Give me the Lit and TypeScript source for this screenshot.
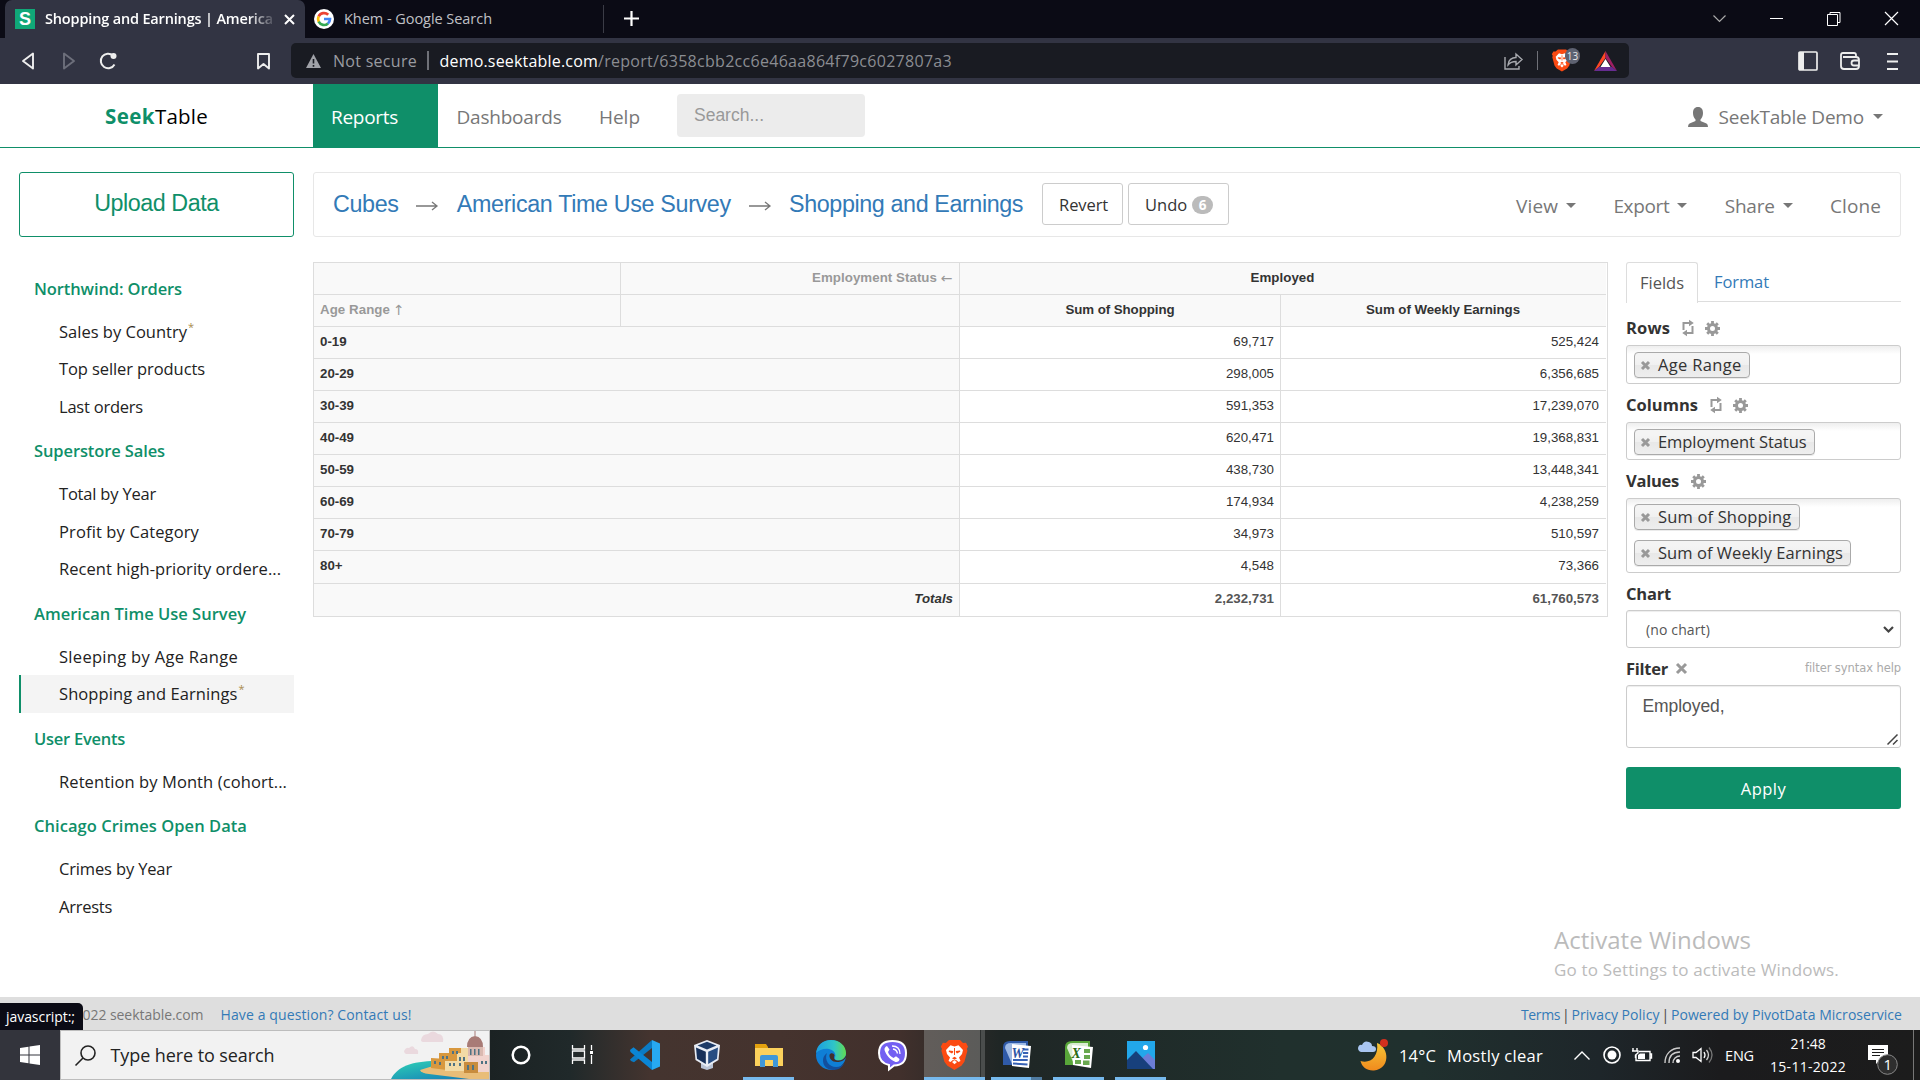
import { LitElement, html, css, svg, nothing } from "lit";
import { customElement } from "lit/decorators.js";

/* Text with a design width: tracking is adjusted after the first render. */
const t = (text: string, w: number, cls = "") =>
  html`<span class="t ${cls}" data-w=${w}>${text}</span>`;

const icon = (w: number, h: number, body: unknown, cls = "") =>
  html`<svg class="i ${cls}" width=${w} height=${h} viewBox="0 0 ${w} ${h}">${body}</svg>`;

const lion = svg`
  <path fill="#fb4a12" d="M8 0h11l3 3 3-.3 2 4-1.200 2 .6 2-3 11-3 4-7 4.300-7-4.300-3-4-3-11 .6-2-1.200-2 2-4 3 .3z"/>
  <path fill="#fff" d="M13.500 6.500l4-1.200 4.500 4.700-1 4-3 3.500 1.500 3.500-2 1-2.300-2-1.700.4-1.700-.4-2.300 2-2-1 1.500-3.500-3-3.500-1-4 4.500-4.700z"/>
  <path fill="#fb4a12" d="M8 10.500l4 .6.3 1-1.300 1.500-3.300-1.800zM19 10.500l-4 .6-.3 1 1.300 1.500 3.300-1.800zM11 18.300l2.500-1.600 2.500 1.600-2.500 1.400zM13 8h1v7h-1z"/>
  <path fill="#fff" d="M11 22l2.500-1.500 2.500 1.500-2.500 2.300z"/>`;

const retweet = icon(12, 18, svg`<g fill="none" stroke="#999" stroke-width="2"><path d="M1.500 11V4h6"/><path d="M10.500 7v7h-6"/></g><path fill="#999" d="M7 .8L11.800 4 7 7.300zM5 10.700v6.600L.2 14z"/>`);
const gear = icon(15, 15, svg`<circle cx="7.500" cy="7.500" r="4" fill="none" stroke="#999" stroke-width="3"/><g stroke="#999" stroke-width="2.800"><path d="M7.500 0v3M7.500 12v3M0 7.500h3M12 7.500h3M2.200 2.200l2 2M10.800 10.800l2 2M2.200 12.800l2-2M10.800 4.200l2-2"/></g>`);
const cross = (s: number) => icon(s, s, svg`<path d="M1 1L${s - 1} ${s - 1}M${s - 1} 1L1 ${s - 1}" stroke="#999" stroke-width="3"/>`);
const caret = icon(10, 5, svg`<path fill="#777" d="M0 0h10L5 5z"/>`);

const GROUPS: [string, number, [string, number, boolean?, boolean?][]][] = [
  ["Northwind: Orders", 148, [["Sales by Country", 128, true], ["Top seller products", 146], ["Last orders", 84]]],
  ["Superstore Sales", 131, [["Total by Year", 97], ["Profit by Category", 140], ["Recent high-priority ordere...", 222]]],
  ["American Time Use Survey", 212, [["Sleeping by Age Range", 179], ["Shopping and Earnings", 178.5, true, true]]],
  ["User Events", 91, [["Retention by Month (cohort...", 228]]],
  ["Chicago Crimes Open Data", 213, [["Crimes by Year", 113], ["Arrests", 53]]],
];

const ROWS: [string, string, string][] = [
  ["0-19", "69,717", "525,424"],
  ["20-29", "298,005", "6,356,685"],
  ["30-39", "591,353", "17,239,070"],
  ["40-49", "620,471", "19,368,831"],
  ["50-59", "438,730", "13,448,341"],
  ["60-69", "174,934", "4,238,259"],
  ["70-79", "34,973", "510,597"],
  ["80+", "4,548", "73,366"],
];

const appIcons = {
  cortana: icon(30, 30, svg`<circle cx="15" cy="15" r="8.300" fill="none" stroke="#fff" stroke-width="2.500"/>`),
  taskview: icon(30, 30, svg`<g fill="none" stroke="#fff" stroke-width="1.300"><path d="M4.500 5v4h12V5M4.500 24v-4h12v4M4.500 11h12v7h-12zM23.500 5v5M23.500 15v9"/></g><rect x="22" y="11" width="3" height="3" fill="#fff"/>`),
  code: icon(30, 30, svg`<path fill="#0b7bc4" d="M0 19.500L22 0v8L4 22.300 1 21z"/><path fill="#0a86d6" d="M0 10l3.500-2.700L22 22v8L.5 12z"/><path fill="#27a9f2" d="M22 0l8 3.500v23L22 30z"/>`),
  vbox: icon(26, 30, svg`<path fill="#b9c4d6" d="M7 23h12v5l-6 2-6-2z"/><path fill="#e8edf5" d="M13 0l13 5-1.500 15L13 27 1.500 20 0 5z"/><path fill="#1d3b68" d="M13 1.800l9.500 3.700L13 9.500 3.500 5.500z"/><path fill="#16305a" d="M2 7.500l9.800 4.200V24L3 18.800z"/><path fill="#274d82" d="M24 7.500l-9.800 4.200V24l8.800-5.200z"/>`),
  folder: icon(28, 24, svg`<path fill="#e3a10e" d="M0 1h11l2 3v3H0z"/><path fill="#fbd15c" d="M0 5h28v18H0z"/><path fill="#3f97d8" d="M5 24V14q0-2 2-2h14q2 0 2 2v10h-5v-7h-8v7z"/>`),
  edge: icon(30, 30, svg`<defs><linearGradient id="eg" x1="0" x2="1"><stop offset="0" stop-color="#1b9de2"/><stop offset=".6" stop-color="#2fc5c8"/><stop offset="1" stop-color="#62dc52"/></linearGradient></defs><circle cx="15" cy="15" r="15" fill="#0f7fd6"/><path fill="url(#eg)" d="M0 13C1 5 7 0 15 0c9 0 15 6 15 13 0 5-4 7.500-8 7.500-3 0-4-1.500-3-3 1-2 .5-7-6-8.500C8 8 3 10 0 13z"/><path fill="#124f9d" d="M11 13c-3 7 2 14 9 14 4 0 7-2 8.500-4.500C25 32 12 32 8 25c-2-5-1-9 3-12z"/><path fill="#42312c" d="M30.500 15.500c-.5 4-4.500 6.500-9.500 6.500-5 0-8-3.500-7.500-7 .5-2.500 4.500-2.500 5 .5-1.500 3 .5 5 4 5 3.500 0 6-2 7.500-5z"/>`),
  viber: icon(29, 30, svg`<path fill="#7360f2" stroke="#fff" stroke-width="2" d="M14.500 1C23 1 28 4 28 13s-4 12-12 12.500L11 29.500V25C4 23.500 1 20 1 13 1 4 6 1 14.500 1z"/><path fill="#fff" d="M9 6l2.500 3.500-1.500 2.500c1 3 2.500 4.500 5.500 6l2.500-1.700 3.500 2.700c0 2-2 3.500-4 3-5-2-9.500-7-11-12C6.300 8 7.500 6.500 9 6z"/><path d="M14 6c5 0 8 3 8 8M15 9c3 .5 4 2 4.500 4.500" fill="none" stroke="#fff" stroke-width="1.300"/>`),
  brave: icon(27, 30, lion),
  word: icon(30, 30, svg`<path fill="#2f5aa8" d="M1 7q0-6 7-6h18v24H1z"/><path fill="#9db9e4" d="M3 8q0-5 6-5h15v5L10 24z"/><path fill="#fff" d="M10 4l19 2-2 22-17-2z"/><path stroke="#3762b5" stroke-width="2" d="M21 9.500h5.500M21 13h5.200M21 16.500h5M11 20h14.700M11 23.500l14.500 1"/><text x="9.500" y="17.500" class="glyph" fill="#2b54a3">W</text>`),
  excel: icon(30, 30, svg`<path fill="#58a639" d="M1 7q0-6 7-6h18v24H1z"/><path fill="#d9ecd2" d="M3 8q0-5 6-5h15v5L10 24z"/><path fill="#fff" d="M8 5l21 2-2 21-18-3z"/><path fill="#69a84f" d="M20 9h6v4h-6zM20 15h6v4h-6zM11 20h6v4h-6zM19 20.500h6.500v4.500H19z"/><text x="7.500" y="17.500" class="glyph" fill="#2c6b12">X</text>`),
  photos: icon(28, 28, svg`<path fill="#22a7ea" d="M0 0h28v28H0z"/><path fill="#6c7dd6" d="M12 20l9-8 7 7v9H12z"/><path fill="#17407c" d="M0 19L9 10l17 18H0z"/><circle cx="18.500" cy="6.500" r="2.600" fill="#fff"/>`),
};

const TASKS: [keyof typeof appIcons, string][] = [
  ["cortana", ""], ["taskview", ""], ["code", ""], ["vbox", ""], ["folder", "open"],
  ["edge", ""], ["viber", ""], ["brave", "open active"], ["word", "open multi"],
  ["excel", "open"], ["photos", "open"],
];

@customElement("app-root")
export class AppRoot extends LitElement {
  static styles = css`
    :host { display: flex; flex-direction: column; width: 1920px; height: 1080px; overflow: hidden; background: #fff;
      font-family: "Open Sans", "Noto Sans", sans-serif; font-size: 16.500px; color: #333; }
    * { box-sizing: border-box; }
    .t { white-space: pre; flex: none; }
    .i { display: block; flex: none; overflow: visible; }
    .tabs, .tool, .head, .crumbs, .foot, .bar { display: flex; align-items: center; }
    .grow { flex: 1; }
    .glyph { font: italic bold 14px "Liberation Serif", serif; }

    .tabs { height: 38px; flex: none; background: #0b0b15; color: #fff; font-size: 14.500px; padding-left: 5px; }
    .tab { display: flex; align-items: center; height: 38px; width: 300px; background: #323443; border-radius: 7px 7px 0 0; padding: 0 10px; font-weight: 600; }
    .fav { width: 20px; height: 20px; background: #10a878; font: bold 18px/20px "Liberation Sans", sans-serif; text-align: center; margin-right: 10px; flex: none; }
    .clip { width: 230px; display: flex; margin-top: -1px; -webkit-mask: linear-gradient(90deg, #000 203px, transparent 232px); mask: linear-gradient(90deg, #000 203px, transparent 232px); }
    .tab .i { margin-left: 9px; }
    .tab2 { display: flex; align-items: center; gap: 10px; width: 299px; height: 28px; padding-left: 9px; color: #c0c1c6; border-right: 1px solid #3b3c46; }
    .tab2 .t { margin-top: -1px; }
    .plus { margin: -1px 0 0 20px; }
    .wins { display: flex; align-items: center; gap: 44px; padding: 0 22.500px 1px 0; }

    .tool { height: 46px; flex: none; background: #323443; padding-left: 21px; font-size: 16px; color: #9a9ca1; }
    .fwd { margin-left: 27px; } .reload { margin-left: 23px; } .mark { margin-left: 140px; }
    .url { display: flex; align-items: center; width: 1338px; height: 35px; margin: -1px 0 0 21px; background: #191b22; border-radius: 5px; padding: 0 12px 0 15px; }
    .url .sec { margin-left: 12px; } .url .dom { margin-left: 11px; color: #fff; }
    .sep { width: 1.500px; height: 19px; background: #6f7178; margin-left: 10px; flex: none; }
    .url .path { color: #8b8d92; }
    .share { margin-right: 3px; }
    .shield { position: relative; margin: 0 22px 0 14px; }
    .badge { position: absolute; left: 13px; top: -1px; width: 15px; height: 16px; border-radius: 8px; background: #5e6271; color: #e8e8ea; font-size: 10px; line-height: 16px; text-align: center; }
    .side { margin-left: 169px; } .wallet { margin-left: 22px; } .menu { margin-left: 27px; }

    .head { height: 64px; flex: none; border-bottom: 1px solid #0f8f69; font-size: 19px; color: #777; }
    .logo { width: 313px; padding-left: 105px; font-size: 20.500px; color: #000; display: flex; }
    .logo b { color: #0f8f69; font-weight: 700; }
    .on { width: 125px; height: 63px; background: #0f8f69; color: #fff; padding-left: 18px; display: flex; align-items: center; padding-top: 2px; }
    .nav { padding-top: 2px; margin-left: 18.500px; } .nav2 { margin-left: 37.500px; }
    .find { width: 188px; height: 43px; margin-left: 37px; background: #ececec; border-radius: 4px; padding-left: 17px; font: 17.500px/43px "Liberation Sans", sans-serif; color: #999; }
    .user { display: flex; align-items: center; padding: 2px 37px 0 0; }
    .user .t { margin: 0 9px 0 11px; }

    .page { height: 849px; flex: none; display: grid; grid-template-columns: 275px 1588px; gap: 19px; padding: 24px 19px 0; }
    .upload { height: 65px; border: 1px solid #0f8f69; border-radius: 3px; color: #0f8f69; font: 23.300px/61px "Liberation Sans", sans-serif; text-align: center; margin-bottom: 25.750px; }
    .group { height: 50px; padding-left: 15px; line-height: 51px; color: #0f8f69; font-weight: 600; }
    .entry { height: 37.500px; padding-left: 40px; line-height: 37px; color: #222; display: flex; }
    .entry.sel { background: #f4f4f4; border-left: 2px solid #0f8f69; padding-left: 38px; }
    .star { color: #a98b4c; font-size: 11px; line-height: 27px; margin-left: 1px; }

    .crumbs { height: 65px; border: 1px solid #e7e7e7; border-radius: 3px; padding: 0 19px; font-size: 19px; color: #777; }
    .lk { font: 23.300px/30px "Liberation Sans", sans-serif; color: #337ab7; margin-top: -2px; }
    .arr { margin: 2px 18.500px 0 17.800px; }
    .btn { height: 42px; border: 1px solid #ccc; border-radius: 3px; display: flex; align-items: center; color: #333; font-size: 16.500px; padding: 1px 15px 0 16px; margin-top: -1px; }
    .b1 { margin-left: 19px; width: 81px; } .b2 { margin-left: 5px; width: 101px; }
    .num { width: 21px; height: 18px; border-radius: 9px; background: #bbb; color: #fff; font: bold 13.500px/18px "Open Sans", sans-serif; text-align: center; margin-left: 5px; }
    .act { display: flex; align-items: center; gap: 8px; margin-left: 37.300px; padding-top: 2px; }

    .body { display: grid; grid-template-columns: 1295px 275px; gap: 18px; margin-top: 25px; align-items: start; }
    .table { border: 1px solid #ddd; padding-right: 1px; height: 355px; font: 13.300px/30px "Liberation Sans", sans-serif; background: #fff; }
    .tr { display: grid; grid-template-columns: 645px 321px 1fr; height: 32px; border-bottom: 1px solid #ddd; }
    .tr.tall { height: 33px; } .tr.last { border-bottom: 0; font-weight: 700; color: #555; }
    .tr.hd { grid-template-columns: 306px 339px 321px 1fr; background: #f9f9f9; font-weight: 700; }
    .tr.hd.one { grid-template-columns: 306px 339px 1fr; }
    .tr > div { padding: 0 6px; border-left: 1px solid #ddd; text-align: right; }
    .tr > div:last-child { padding-right: 7px; }
    .tr > div:first-child { border-left: 0; padding-left: 6px; }
    .tr.hd > div { text-align: center; }
    .tr > div.rh { text-align: left; font-weight: 700; background: #f9f9f9; color: #333; }
    .tr > div.tot { font-style: italic; background: #f9f9f9; color: #333; }
    .tr.hd > div.dim { color: #999; display: flex; gap: 3px; } .tr.hd > div.end { justify-content: flex-end; }
    .tr i { font: 14px/30px "DejaVu Sans", sans-serif; }
    .end i { width: 13px; text-align: center; }

    .ft { display: flex; height: 40px; border-bottom: 1px solid #ddd; color: #337ab7; line-height: 40px; }
    .ft div { padding-left: 16px; }
    .ft .cur { width: 72px; height: 41px; padding-left: 13px; border: 1px solid #ddd; border-bottom: 0; background: #fff; border-radius: 3px 3px 0 0; color: #555; line-height: 39px; }
    .lab { height: 38px; padding-top: 3px; font-weight: 700; display: flex; align-items: center; }
    .lab.low { height: 37px; }
    .lab.first { margin-top: 5px; }
    .lab .i { margin: 1px 0 0 11.500px; } .lab .x { display: flex; margin-left: -4px; }
    .hint { font: 11.500px "DejaVu Sans", sans-serif; color: #aaa; }
    .box { border: 1px solid #ccc; border-radius: 3px; background: linear-gradient(#eee 0, #fff 8px); padding: 6px 7px; display: flex; flex-direction: column; align-items: flex-start; gap: 10px; height: 38px; }
    .box.tall { height: 39px; }
    .box.two { height: 75px; padding-top: 5px; }
    .tag { height: 26px; border: 1px solid #aaa; border-radius: 4px; background: linear-gradient(#f4f4f4 20%, #f0f0f0 50%, #e8e8e8 52%, #eee); box-shadow: 0 1px 0 rgba(0,0,0,.08); display: flex; align-items: center; gap: 8px; padding: 0 7px 0 6px; color: #333; line-height: 24px; }
    .field { border: 1px solid #ccc; border-radius: 3px; box-shadow: inset 0 1px 1px rgba(0,0,0,.075); color: #555; }
    .sel1 { height: 38px; display: flex; align-items: center; justify-content: space-between; padding: 1px 6px 0 19px; font-size: 14px; }
    .area { height: 63px; display: flex; justify-content: space-between; align-items: flex-end; padding: 0 2px 2px 15.500px; }
    .area .t { align-self: flex-start; font: 17.500px/41px "Liberation Sans", sans-serif; }
    .apply { margin-top: 19px; height: 42px; border-radius: 3px; background: #0f8f69; color: #fff; line-height: 43px; text-align: center; }

    .foot { height: 33px; flex: none; background: #dedede; padding: 2px 18px 0 19px; font-size: 14px; color: #777; }
    .foot a { color: #337ab7; } .foot .q { margin-left: 17px; } .foot .p { width: 11.500px; text-align: center; color: #444; }
    .year { margin-left: 63.500px; }
    .bubble { position: absolute; left: 0; top: 1003px; width: 83px; height: 27px; background: #0b0b15; color: #fff; border-radius: 0 5px 0 0; font-size: 14px; line-height: 27px; padding-left: 6px; }
    .mark1 { position: absolute; left: 1554px; top: 920px; color: #bbb; line-height: 40px; font-size: 24px; display: flex; flex-direction: column; align-items: flex-start; }
    .mark1 .small { font-size: 17px; line-height: 20px; }

    .bar { height: 50px; flex: none; color: #fff; background: linear-gradient(90deg, #33343c 0, #33343c 60px, #1b2223 490px, #20292a 570px, #44342f 650px, #45332e 780px, #41302c 900px, #1f2625 1000px, #20302d 1280px, #20302e 1420px, #1e262a 1600px, #1b1b1d 1720px, #1c1c1c 1920px); }
    .start { width: 60px; padding-left: 20px; }
    .seek { width: 430px; height: 50px; background: #f2f2f2; border: 1px solid #bdbdbd; display: flex; align-items: center; color: #222; padding-left: 14px; font-size: 18px; }
    .seek .t { margin: 0 auto 0 14.500px; }
    .apps { display: flex; margin-left: -1px; }
    .app { width: 62px; flex: none; height: 50px; display: flex; flex-direction: column; align-items: center; justify-content: space-between; padding: 0 5px 0 6px; }
    .hold { height: 50px; display: flex; align-items: center; }
    .open .hold { height: 47px; padding-top: 3px; }
    .open::after { content: ""; width: 51px; height: 3px; background: #76b9ed; }
    .active { padding: 0; background: linear-gradient(90deg, transparent 1px, #625d5a 1px, #5b5b59 57px, #2c2f2e 57px, #2c2f2e 58px, #4a4d4c 58px); }
    .active::after { width: 61px; margin-left: 1px; }
    .multi::after { background: linear-gradient(90deg, #76b9ed 40px, #4f7ba0 40px); }
    .wx { margin-left: 187px; } .deg { margin-left: 11px; } .clear { margin-left: 11px; }
    .bar .c1 { margin-left: 31px; } .bar .c2 { margin-left: 13px; } .bar .c3 { margin-left: 11px; } .bar .c4 { margin-left: 12px; } .bar .c5 { margin-left: 11px; }
    .eng { margin-left: 12px; font-size: 14.500px; }
    .clock { width: 76px; margin-left: 16px; font-size: 14px; display: flex; flex-direction: column; align-items: center; line-height: 23px; }
    .note { margin-left: 22px; }
    .deg, .clear { font-size: 16.500px; padding-top: 1px; }
    .edge { width: 1px; height: 50px; background: #777; margin-left: 15px; }
  `;

  firstUpdated() {
    this.renderRoot.querySelectorAll<HTMLElement>("[data-w]").forEach((el) => {
      const target = Number(el.dataset.w);
      const natural = el.getBoundingClientRect().width;
      const n = el.textContent!.length;
      el.style.letterSpacing = `${(target - natural) / n}px`;
    });
  }

  private chrome() {
    return html`
      <div class="tabs">
        <div class="tab">
          <span class="fav">S</span>
          <span class="clip">${t("Shopping and Earnings | America", 228)}</span>
          ${icon(11, 11, svg`<path d="M1 1l9 9M10 1l-9 9" stroke="#fff" stroke-width="2"/>`)}
        </div>
        <div class="tab2">
          ${icon(20, 20, svg`<circle cx="10" cy="10" r="10" fill="#fff"/><g fill="none" stroke-width="2.700"><path stroke="#ea4335" d="M4.700 7.500A5.900 5.900 0 0 1 14.200 5.800"/><path stroke="#fbbc05" d="M4.700 7.300a6 6 0 0 0 .1 5.600"/><path stroke="#34a853" d="M4.700 12.700a5.900 5.900 0 0 0 9.300 1.700"/><path stroke="#4285f4" d="M10 10h6a6 6 0 0 1-2.100 4.500"/></g>`)}
          ${t("Khem - Google Search", 148)}
        </div>
        ${icon(15, 15, svg`<path d="M7.500 0v15M0 7.500h15" stroke="#fff" stroke-width="2.200"/>`, "plus")}
        <span class="grow"></span>
        <div class="wins">
          ${icon(13, 7, svg`<path d="M.5.5l6 6 6-6" fill="none" stroke="#aaa" stroke-width="1.200"/>`)}
          ${icon(13, 2, svg`<path d="M0 .5h13" stroke="#fff"/>`)}
          ${icon(14, 14, svg`<path d="M.5 2.500h10v11H.5zM3 2.500V.5h10v10h-2.500" fill="none" stroke="#fff"/>`)}
          ${icon(13, 13, svg`<path d="M0 0l13 13M13 0L0 13" stroke="#fff" stroke-width="1.200"/>`)}
        </div>
      </div>
      <div class="tool">
        ${icon(14, 18, svg`<path d="M12 1.500v15L2 9z" fill="none" stroke="#eee" stroke-width="1.900" stroke-linejoin="round"/>`)}
        ${icon(14, 18, svg`<path d="M2 1.500v15L12 9z" fill="none" stroke="#6d6f7b" stroke-width="1.900" stroke-linejoin="round"/>`, "fwd")}
        ${icon(18, 18, svg`<path d="M15.500 12.500A7.300 7.300 0 1 1 14 3.500" fill="none" stroke="#eee" stroke-width="2"/><circle cx="14.500" cy="4" r="3" fill="#eee"/>`, "reload")}
        ${icon(13, 17, svg`<path d="M1 1h11v14.500L6.500 11 1 15.500z" fill="none" stroke="#eee" stroke-width="1.900" stroke-linejoin="round"/>`, "mark")}
        <div class="url">
          ${icon(15, 14, svg`<path d="M7.500 0L15 14H0z" fill="#a0a2a8"/><path d="M7.500 5v4.500M7.500 11v1.700" stroke="#191b22" stroke-width="1.600"/>`)}
          ${t("Not secure", 84, "sec")}<span class="sep"></span>
          ${t("demo.seektable.com", 158.5, "dom")}${t("/report/6358cbb2cc6e46aa864f79c6027807a3", 354, "path")}
          <span class="grow"></span>
          ${icon(20, 18, svg`<path d="M1 5v12h14v-3M4 13c0-5 4-7.500 8-7.500V2l6 5.500-6 5.500V9.500C9 9.500 6 10.500 4 13z" fill="none" stroke="#a7a9ae" stroke-width="1.400"/>`, "share")}
          <span class="sep"></span>
          <span class="shield">${html`<svg class="i" width="20" height="23" viewBox="0 0 27 30">${lion}</svg>`}<span class="badge">13</span></span>
          ${icon(23, 20, svg`<path fill="#ff4724" d="M11.500 0v7L5 16l-5 4z"/><path fill="#9e1f63" d="M11.500 0v7L18 16l5 4z"/><path fill="#662d91" d="M0 20l5-4h13l5 4z"/><path fill="#fff" d="M11.500 8l5 8h-10z"/>`)}
        </div>
        ${icon(20, 20, svg`<rect x="1" y="1" width="18" height="18" rx="1" fill="none" stroke="#eee" stroke-width="1.700"/><path d="M1 1h5v18H1z" fill="#eee"/>`, "side")}
        ${icon(20, 18, svg`<path d="M16 5V3q0-2-2-2H3Q1 1 1 3v11q0 3 3 3h12q3 0 3-3V8q0-3-3-3H3M19 8.500h-5a2.500 2.500 0 0 0 0 5h5" fill="none" stroke="#eee" stroke-width="1.800"/>`, "wallet")}
        ${icon(11, 17, svg`<path d="M0 1h11M0 8.500h11M0 16h11" stroke="#eee" stroke-width="1.800"/>`, "menu")}
      </div>`;
  }

  private header() {
    return html`
      <div class="head">
        <div class="logo"><b class="t" data-w="50">Seek</b>${t("Table", 53)}</div>
        <div class="on">${t("Reports", 67)}</div>
        ${t("Dashboards", 105, "nav")}${t("Help", 41, "nav nav2")}
        <div class="find">${t("Search...", 70)}</div>
        <span class="grow"></span>
        <div class="user">
          ${icon(20, 20, svg`<path fill="#777" d="M10 0c3.500 0 5 2.500 5 6 0 3-1 5-2.500 6.500v1.500l6 2.500q1.500.8 1.500 3.500H0q0-2.700 1.500-3.500l6-2.500v-1.500C6 11 5 9 5 6c0-3.500 1.500-6 5-6z"/>`)}
          ${t("SeekTable Demo", 145.5)}${caret}
        </div>
      </div>`;
  }

  private tableView() {
    return html`
      <div class="table">
        <div class="tr hd one"><div></div><div class="dim end">${t("Employment Status", 125)}<i>←</i></div><div>${t("Employed", 64)}</div></div>
        <div class="tr hd"><div class="dim">${t("Age Range", 70)}<i>↑</i></div><div></div><div>${t("Sum of Shopping", 109)}</div><div>${t("Sum of Weekly Earnings", 154)}</div></div>
        ${ROWS.map(([a, b, c], i) => html`<div class="tr ${i === 7 ? "tall" : ""}"><div class="rh">${a}</div><div>${b}</div><div>${c}</div></div>`)}
        <div class="tr last"><div class="tot">Totals</div><div>2,232,731</div><div>61,760,573</div></div>
      </div>`;
  }

  private tag(text: string, w: number) {
    return html`<div class="tag">${cross(9)}${t(text, w)}</div>`;
  }

  private panel() {
    return html`
      <div>
        <div class="ft"><div class="cur">${t("Fields", 44)}</div><div>${t("Format", 55)}</div></div>
        <div class="lab first">${t("Rows", 44)}${retweet}${gear}</div>
        <div class="box tall">${this.tag("Age Range", 83.5)}</div>
        <div class="lab">${t("Columns", 72)}${retweet}${gear}</div>
        <div class="box">${this.tag("Employment Status", 148.5)}</div>
        <div class="lab">${t("Values", 53)}${gear}</div>
        <div class="box two">${this.tag("Sum of Shopping", 133.5)}${this.tag("Sum of Weekly Earnings", 185)}</div>
        <div class="lab low">${t("Chart", 45)}</div>
        <div class="field sel1">${t("(no chart)", 64)}${icon(11, 7, svg`<path d="M1 1l4.500 4.500L10 1" fill="none" stroke="#444" stroke-width="2.200"/>`)}</div>
        <div class="lab low">${t("Filter", 42)}<span class="x">${cross(11)}</span><span class="grow"></span>${t("filter syntax help", 96, "hint")}</div>
        <div class="field area">${t("Employed,", 82)}${icon(11, 11, svg`<path d="M.5 10.500l10-10M6 10.500L10.500 6" stroke="#444" stroke-width="1.500"/>`)}</div>
        <div class="apply">${t("Apply", 45.5)}</div>
      </div>`;
  }

  private city() {
    return icon(98, 48, svg`
      <defs><linearGradient id="sea" x1="0" x2="1" y2="1"><stop offset="0" stop-color="#2fd3b5"/><stop offset="1" stop-color="#1273b8"/></linearGradient></defs>
      <path fill="url(#sea)" d="M0 48C6 36 20 30 45 30l53 8v10z"/>
      <path fill="#ead9de" d="M30 9q1-6 7-6 5-5 10 0 6 0 5 8H33q-3 0-3-2zM13 20q2-4 5-3 4-4 6 1 4 0 3 5H15q-2-1-2-3z"/>
      <path fill="#e9bd78" d="M29 39l13-4 56 4v9H78l-40-5q-8-1-9-4z"/>
      <path fill="#d8983e" d="M40 27l16 1v11l-16-2zM48 22h14v10H48zM58 17h13v14H58z"/>
      <path fill="#f2dba6" d="M54 30h12v10H54zM66 22h11v18H66zM70 17h9v8h-9z"/>
      <path fill="#f1d3cd" d="M77 16h17v18H77zM86 24h12v17H86z"/>
      <path fill="#c88c3d" d="M73 31h14v11H73z"/>
      <path fill="#a87b76" d="M76 16q0-10 8-11 8 1 8 11zM83.500 0h1v6h-1z"/>
      <path fill="#d9b9b0" d="M77 16h15v9H77z"/>
      <path fill="#4f7383" d="M79 18h1.500v6H79zM83 18h1.500v6H83zM87 18h1.500v6H87zM58 32h2v3h-2zM62 32h2v3h-2zM68 26h2v4h-2zM72 26h2v4h-2zM68 32h2v3h-2zM51 25h2v3h-2zM55 25h2v3h-2zM61 20h2v3h-2zM65 20h2v3h-2zM76 34h2v5h-2zM81 34h2v5h-2zM90 30h2v3h-2zM94 30h2v3h-2zM43 30h2v3h-2zM48 31h2v3h-2z"/>`);
  }

  private taskbar() {
    return html`
      <div class="bar">
        <div class="start">${icon(20, 20, svg`<path fill="#fff" d="M0 3l8.500-1.200v7.700H0zM9.500 1.600L20 0v9.500H9.500zM0 10.500h8.500v7.700L0 17zM9.500 10.500H20V20L9.500 18.400z"/>`)}</div>
        <div class="seek">
          ${icon(21, 21, svg`<circle cx="13" cy="8" r="7" fill="none" stroke="#222" stroke-width="1.600"/><path d="M8 13l-7.500 7.500" stroke="#222" stroke-width="1.600"/>`)}
          ${t("Type here to search", 164)}
          ${this.city()}
        </div>
        <div class="apps">${TASKS.map(([k, c]) => html`<div class="app ${c}"><div class="hold">${appIcons[k]}</div></div>`)}</div>
        ${icon(30, 32, svg`<defs><linearGradient id="mn" x1="0" x2="0" y2="1"><stop offset="0" stop-color="#f6c636"/><stop offset="1" stop-color="#f08a1d"/></linearGradient></defs><path fill="url(#mn)" d="M19 4c13 5 13 26-3 27.500C9 32 4 28 2.500 22 12 25 21 18 19 4z"/><path fill="#a9c6f1" d="M3 13q-3-1-3-4 1-4 4-3 2-5 7-3 3 1 3 4 4 0 4 3t-3 3z"/><circle cx="26" cy="4" r="4" fill="#d32f1e"/>`, "wx")}
        ${t("14°C", 37, "deg")}${t("Mostly clear", 96, "clear")}
        ${icon(16, 9, svg`<path d="M.5 8.500L8 1l7.500 7.500" fill="none" stroke="#fff" stroke-width="1.400"/>`, "c1")}
        ${icon(18, 18, svg`<circle cx="9" cy="9" r="8" fill="none" stroke="#fff" stroke-width="1.600"/><circle cx="9" cy="9" r="4.500" fill="#fff"/>`, "c2")}
        ${icon(20, 14, svg`<path d="M4 6v6.500h14V3.500H7M18.500 6h1v4h-1M1 0v3M5 0v3M0 3h6v2L3.500 7v3" fill="none" stroke="#fff" stroke-width="1.400"/><path fill="#fff" d="M8 5.500h5V11H6V7z"/>`, "c3")}
        ${icon(17, 16, svg`<g fill="none" stroke="#ccc" stroke-width="1.400"><path d="M1 16C1 7 7 1 16 1M5 16C5 9 9 5 16 5M9 16c0-4 3-7 7-7"/></g><circle cx="14" cy="14" r="2" fill="#fff"/>`, "c4")}
        ${icon(21, 18, svg`<path d="M1 6.500h3l5-4v13l-5-4H1zM12 6q2 3 0 6" fill="none" stroke="#fff" stroke-width="1.300"/><path d="M14.500 4q4 5 0 10" fill="none" stroke="#ccc" stroke-width="1.300"/><path d="M17 1.500q6 7.500 0 15" fill="none" stroke="#777" stroke-width="1.300"/>`, "c5")}
        ${t("ENG", 29, "eng")}
        <div class="clock">${t("21:48", 35)}${t("15-11-2022", 76)}</div>
        ${icon(30, 30, svg`<path fill="#fff" d="M0 5h20v15h-8l-4 4v-4H0z"/><path d="M4 9.500h12M4 12.500h12M4 15.500h8" stroke="#1c1c1c"/><circle cx="19.500" cy="24.500" r="9.800" fill="#2e2e2e" stroke="#888"/><text x="15.500" y="30" fill="#fff" font-size="15">1</text>`, "note")}
        <span class="edge"></span>
      </div>`;
  }

  render() {
    const arrow = icon(22, 10, svg`<path d="M0 5h21M16 1l5 4-5 4" fill="none" stroke="#777" stroke-width="1.300"/>`, "arr");
    return html`
      ${this.chrome()} ${this.header()}
      <div class="page">
        <div>
          <div class="upload">${t("Upload Data", 124.5)}</div>
          ${GROUPS.map(([name, w, items]) => html`
            <div class="group">${t(name, w)}</div>
            ${items.map(([label, lw, star, sel]) => html`<div class="entry ${sel ? "sel" : ""}">${t(label, lw)}${star ? html`<span class="star">*</span>` : nothing}</div>`)}`)}
        </div>
        <div>
          <div class="crumbs">
            ${t("Cubes", 65.5, "lk")}${arrow}${t("American Time Use Survey", 274, "lk")}${arrow}${t("Shopping and Earnings", 234, "lk")}
            <div class="btn b1">${t("Revert", 49)}</div>
            <div class="btn b2">${t("Undo", 42)}<span class="num">6</span></div>
            <span class="grow"></span>
            <div class="act">${t("View", 42)}${caret}</div>
            <div class="act">${t("Export", 56)}${caret}</div>
            <div class="act">${t("Share", 50)}${caret}</div>
            <div class="act">${t("Clone", 51)}</div>
          </div>
          <div class="body">${this.tableView()}${this.panel()}</div>
        </div>
      </div>
      <div class="foot">
        ${t("022 seektable.com", 121, "year")}<a class="t q" data-w="191">Have a question? Contact us!</a>
        <span class="grow"></span>
        <a class="t" data-w="39">Terms</a><span class="p">|</span><a class="t" data-w="88">Privacy Policy</a><span class="p">|</span><a class="t" data-w="231">Powered by PivotData Microservice</a>
      </div>
      ${this.taskbar()}
      <div class="bubble">${t("javascript:;", 69)}</div>
      <div class="mark1">${t("Activate Windows", 197)}${t("Go to Settings to activate Windows.", 285, "small")}</div>`;
  }
}
